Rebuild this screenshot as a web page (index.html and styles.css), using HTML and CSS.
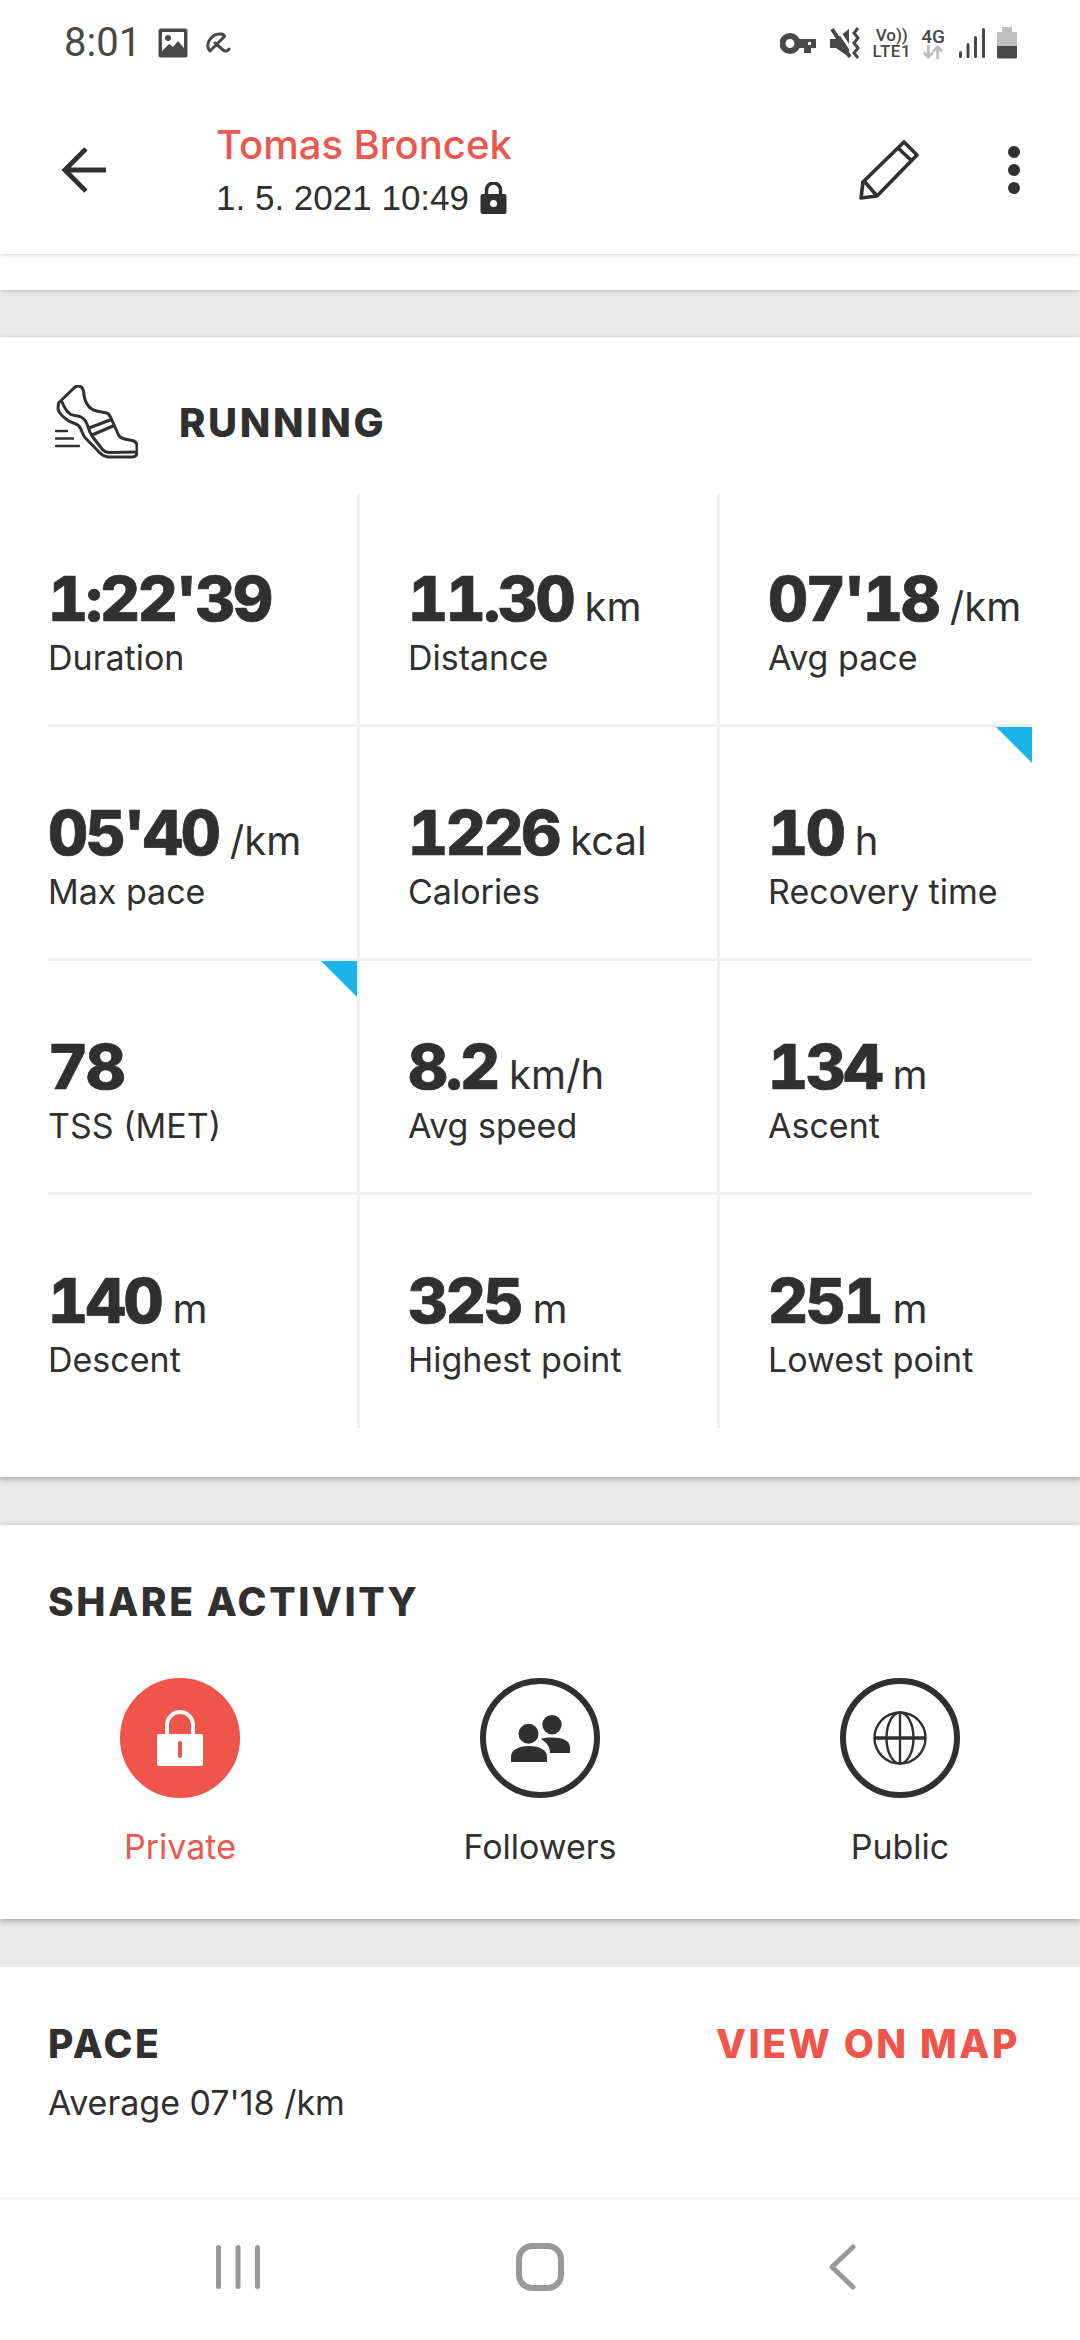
FILE: index.html
```html
<!DOCTYPE html>
<html lang="en">
<head>
    <meta charset="UTF-8">
    <meta name="viewport" content="width=device-width, initial-scale=1.0">
    <title>Running activity</title>
    <link rel="stylesheet" href="styles.css">
</head>
<body>
    <div class="top">
        <div class="status-bar">
            <div class="status-left">
                <span class="time">8:01</span>
                <svg class="ic-gallery" width="30" height="30" viewBox="0 0 30 30"><rect x="0.5" y="0.5" width="29" height="29" rx="2.5" fill="#484848"/><rect x="4" y="4" width="22" height="22" fill="#fff"/><circle cx="10" cy="10" r="3" fill="#484848"/><path d="M4 23l7-7 4 3 5-6 6 7v6H4z" fill="#484848"/></svg>
                <svg class="ic-umbrella" width="26" height="22" viewBox="0 0 26 22" fill="none" stroke="#484848" stroke-width="3" stroke-linecap="round" stroke-linejoin="round"><path d="M5 19C-1 12 7 1 16 2c2 .2 3 1 3.500 2.500L5 19zM10 11l8 7c2 1.800 5 1 6-1"/></svg>
            </div>
            <div class="status-right">
                <svg class="ic-key" width="36" height="21" viewBox="0 0 36 21"><circle cx="10" cy="10.500" r="7.500" fill="none" stroke="#484848" stroke-width="6"/><path d="M16 6h20v9h-5v5h-7v-5h-8z" fill="#484848"/><rect x="28" y="9" width="3" height="3" fill="#fff"/></svg>
                <svg class="ic-mute" width="30" height="32" viewBox="0 0 30 32"><path d="M0 12h6L19 2v28L6 21H0z" fill="#484848"/><path d="M6 0l18 27" stroke="#fff" stroke-width="3"/><path d="M2 2l18 28" stroke="#484848" stroke-width="4"/><path d="M28 1l-4 5 4 5-4 5 4 5-4 5 4 5" fill="none" stroke="#484848" stroke-width="3"/></svg>
                <div class="volte"><span>Vo))</span><span class="lte">LTE1</span></div>
                <div class="net">
                    <span>4G</span>
                    <svg width="22" height="14" viewBox="0 0 22 15" fill="none" stroke="#bdbdbd" stroke-width="3"><path d="M6 0v13M1 8l5 5 5-5"/><path d="M16 15V2M11 7l5-5 5 5"/></svg>
                </div>
                <svg class="ic-signal" width="26" height="30" viewBox="0 0 26 30" fill="#484848"><rect x="0" y="23" width="3" height="7" rx="1.500"/><rect x="7.500" y="15" width="3" height="15" rx="1.500"/><rect x="15" y="8" width="3" height="22" rx="1.500"/><rect x="23" y="0" width="3" height="30" rx="1.500"/></svg>
                <svg class="ic-battery" width="20" height="32" viewBox="0 0 20 32"><path d="M5 0h10v5h5v15H0V5h5z" fill="#bfbfbf"/><path d="M0 19h20v11a1.500 1.500 0 0 1-1.500 1.500h-17A1.500 1.500 0 0 1 0 30z" fill="#484848"/></svg>
            </div>
        </div>
        <div class="app-bar">
            <svg class="back" width="48" height="46" viewBox="0 0 48 48" fill="none" stroke="#303030" stroke-width="5"><path d="M47 24H3M26 2L4 24l22 22"/></svg>
            <div class="title-block">
                <div class="title">Tomas Broncek</div>
                <div class="subtitle">1. 5. 2021 10:49
                    <svg width="27" height="32" viewBox="0 0 26 32"><path d="M2 12h22a2 2 0 0 1 2 2v16a2 2 0 0 1-2 2H2a2 2 0 0 1-2-2V14a2 2 0 0 1 2-2z" fill="#303030"/><path d="M6 13V8a7 7 0 0 1 14 0v5" fill="none" stroke="#303030" stroke-width="3.500"/><circle cx="13" cy="21.500" r="3.500" fill="#fff"/></svg>
                </div>
            </div>
            <svg class="pencil" width="60" height="60" viewBox="0 0 60 60" fill="none" stroke="#303030" stroke-width="3.600" stroke-linejoin="round"><path d="M45 2l13 13-40 41-16 2 2-16z"/><path d="M39 8l14 13M6 42l12 14"/></svg>
            <div class="dots"><i></i><i></i><i></i></div>
        </div>
    </div>
    <div class="strip"></div>

    <section class="card stats-card">
        <div class="activity">
            <svg width="83" height="74" viewBox="0 0 83 74" fill="none" stroke="#303030" stroke-width="3" stroke-linecap="round" stroke-linejoin="round">
                <path d="M3.500 18L19 3c3-3 8-3 9.500 3 .5 5 1 9 3 12 2 4 6 7 10 8 3 1 7 1 10 2 2 .5 3 2 4 4l8 18c1.500 2.500 3 3.500 6 4l7.500 1.500c3 .6 5 2.500 5 5.500V67c0 3.500-1.500 5-5 5H55c-4 0-7-1-10-4L29.500 52c-2-3-3-8-5.500-11-3-3-7-3-11-5.500C8 32 4 29 3 24z"/>
                <path d="M7 17c2 5 5 10 9 12.500 3 1.500 7 1 10 2.500 4 2 6 6 7 10 1 3 2 6 4 9l10 13c2 2.500 5 3.500 8 3.500l27-.5"/>
                <path d="M34 43l21-8M37 50l21-9"/>
                <path d="M1 46h11M1 53.500h17M1 61h23" stroke-width="2.400"/>
            </svg>
            <h2 class="activity-name">RUNNING</h2>
        </div>
        <div class="grid">
            <div class="cell"><div class="value"><b>1:22'39</b></div><div class="label">Duration</div></div>
            <div class="cell"><div class="value"><b>11.30</b> km</div><div class="label">Distance</div></div>
            <div class="cell"><div class="value"><b>07'18</b> /km</div><div class="label">Avg pace</div></div>
            <div class="cell"><div class="value"><b>05'40</b> /km</div><div class="label">Max pace</div></div>
            <div class="cell"><div class="value"><b>1226</b> kcal</div><div class="label">Calories</div></div>
            <div class="cell"><span class="corner"></span><div class="value"><b>10</b> h</div><div class="label">Recovery time</div></div>
            <div class="cell"><span class="corner"></span><div class="value"><b>78</b></div><div class="label">TSS (MET)</div></div>
            <div class="cell"><div class="value"><b>8.2</b> km/h</div><div class="label">Avg speed</div></div>
            <div class="cell"><div class="value"><b>134</b> m</div><div class="label">Ascent</div></div>
            <div class="cell"><div class="value"><b>140</b> m</div><div class="label">Descent</div></div>
            <div class="cell"><div class="value"><b>325</b> m</div><div class="label">Highest point</div></div>
            <div class="cell"><div class="value"><b>251</b> m</div><div class="label">Lowest point</div></div>
        </div>
    </section>

    <section class="card share-card">
        <h3 class="section-title">SHARE ACTIVITY</h3>
        <div class="share-options">
            <div class="share active">
                <div class="circle">
                    <svg width="46" height="56" viewBox="0 0 46 56"><path d="M10 26V15a13 13 0 0 1 26 0v11" fill="none" stroke="#fff" stroke-width="4"/><rect y="24" width="46" height="32" rx="2" fill="#fff"/><rect x="21" y="31" width="4" height="17" rx="2" fill="#f0554c"/></svg>
                </div>
                <span>Private</span>
            </div>
            <div class="share">
                <div class="circle">
                    <svg width="59" height="47" viewBox="0 0 59 47" fill="#303030"><ellipse cx="17.500" cy="18.700" rx="10" ry="10"/><path d="M0 47V42c0-7 7-11 18-11s18 4 18 11v5z"/><ellipse cx="41" cy="9.700" rx="9.700" ry="9.700"/><path d="M30 24c2-1 6-1.500 10-1.500 12 0 19 3 19 10V38H39c0-6-3-10-9-14z"/></svg>
                </div>
                <span>Followers</span>
            </div>
            <div class="share">
                <div class="circle">
                    <svg width="54" height="54" viewBox="0 0 54 54" fill="none" stroke="#303030" stroke-width="2.400"><circle cx="27" cy="27" r="25.500"/><ellipse cx="27" cy="27" rx="13.500" ry="25.500"/><path d="M27 1.500v51"/><path d="M1.500 27h51" stroke-width="3.400"/></svg>
                </div>
                <span>Public</span>
            </div>
        </div>
    </section>

    <section class="card pace-card">
        <div class="pace-head">
            <h3 class="section-title">PACE</h3>
            <a class="map-link">VIEW ON MAP</a>
        </div>
        <p class="pace-avg">Average 07'18 /km</p>
    </section>

    <nav class="nav-bar">
        <svg width="44" height="46" viewBox="0 0 44 46" fill="#999"><rect x="0" y="1" width="5" height="44" rx="2.500"/><rect x="19.500" y="1" width="5" height="44" rx="2.500"/><rect x="39" y="1" width="5" height="44" rx="2.500"/></svg>
        <svg width="48" height="48" viewBox="0 0 48 48" fill="none" stroke="#999" stroke-width="6"><rect x="3" y="3" width="42" height="42" rx="13"/></svg>
        <svg width="28" height="46" viewBox="0 0 28 46" fill="none" stroke="#999" stroke-width="5" stroke-linecap="round" stroke-linejoin="round"><path d="M25 3L4 23l21 20"/></svg>
    </nav>
</body>
</html>
```

FILE: styles.css
```css
* {
    box-sizing: border-box;
}
body {
    margin: 0;
    width: 1080px;
    height: 2340px;
    background-color: #eaeaea;
    color: #303030;
    font-family: Inter, "Liberation Sans", sans-serif;
    overflow: hidden;
}
h2, h3, p {
    margin: 0;
}
.top {
    position: relative;
    z-index: 2;
    height: 254px;
    background: white;
    box-shadow: 0 1px 5px rgba(0, 0, 0, 0.16);
}
.status-bar {
    height: 90px;
    padding: 27px 63px 0 64px;
    display: flex;
    justify-content: space-between;
    align-items: flex-start;
}
.status-left {
    display: flex;
    align-items: center;
    gap: 17px;
}
.time {
    font-family: Roboto, sans-serif;
    font-size: 40px;
    line-height: 32px;
    color: #484848;
}
.status-right {
    display: flex;
    align-items: center;
    gap: 12px;
    color: #484848;
    font-family: Roboto, sans-serif;
    font-weight: 500;
}
.ic-key {
    margin-right: 2px;
}
.volte {
    display: flex;
    flex-direction: column;
    align-items: center;
    font-size: 17px;
    line-height: 16px;
    width: 39px;
    margin-right: -2px;
}
.lte {
    letter-spacing: 0.5px;
}
.net {
    display: flex;
    flex-direction: column;
    align-items: center;
    font-size: 19px;
    line-height: 17px;
    margin-right: 2px;
}
.net svg {
    display: block;
}
.app-bar {
    height: 164px;
    display: flex;
    align-items: center;
    padding: 0 60px 4px 60px;
}
.back {
    flex: none;
}
.title-block {
    flex: 1;
    margin-left: 108px;
}
.title {
    font-size: 40px;
    font-weight: 500;
    line-height: 50px;
    color: #ea584f;
}
.subtitle {
    display: flex;
    align-items: center;
    gap: 11px;
    margin-top: 6px;
    font-size: 35px;
    line-height: 44px;
    font-family: "Liberation Sans", sans-serif;
}
.pencil {
    margin-right: 89px;
}
.dots {
    display: flex;
    flex-direction: column;
    gap: 6px;
}
.dots i {
    display: block;
    width: 12px;
    height: 12px;
    border-radius: 50%;
    background: #303030;
}
.strip {
    height: 36px;
    background: white;
    box-shadow: 0 1px 4px rgba(0, 0, 0, 0.2);
    position: relative;
    z-index: 1;
}
.card {
    background: white;
    box-shadow: 0 2px 6px rgba(0, 0, 0, 0.3);
    position: relative;
}
.stats-card {
    margin-top: 47px;
    height: 1140px;
}
.activity {
    height: 156px;
    padding: 14px 0 0 55px;
    display: flex;
    align-items: center;
    gap: 41px;
}
.activity-name {
    font-size: 40px;
    font-weight: 800;
    letter-spacing: 2.6px;
}
.grid {
    margin-left: 48px;
    width: 984px;
    display: grid;
    grid-template-columns: 312px 360px 312px;
}
.cell {
    position: relative;
    height: 234px;
    padding-top: 70px;
    padding-left: 48px;
    border-bottom: 3px solid #f0f0f0;
    border-right: 3px solid #f0f0f0;
}
.cell:nth-child(3n+1) {
    padding-left: 0;
}
.cell:nth-child(3n) {
    border-right: none;
}
.cell:nth-last-child(-n+3) {
    border-bottom: none;
    height: 233px;
}
.corner {
    position: absolute;
    top: 0;
    right: 0;
    width: 36px;
    height: 36px;
    background: #1ab4ea;
    clip-path: polygon(0 0, 100% 0, 100% 100%);
}
.value {
    font-size: 40px;
    line-height: 72px;
    white-space: nowrap;
}
.value b {
    font-size: 62px;
    font-weight: 800;
    font-variant-numeric: tabular-nums;
    letter-spacing: -2.3px;
    -webkit-text-stroke: 0.7px #303030;
}
.label {
    margin-top: -5px;
    font-size: 34px;
    line-height: 40px;
}
.share-card {
    margin-top: 48px;
    height: 394px;
    padding-top: 54px;
}
.section-title {
    font-size: 39px;
    font-weight: 800;
    line-height: 46px;
    letter-spacing: 2.6px;
    padding-left: 48px;
}
.share-options {
    display: flex;
    margin-top: 53px;
}
.share {
    width: 360px;
    display: flex;
    flex-direction: column;
    align-items: center;
    font-size: 34px;
    line-height: 40px;
    gap: 29px;
}
.circle {
    width: 120px;
    height: 120px;
    border-radius: 50%;
    border: 6px solid #303030;
    display: flex;
    align-items: center;
    justify-content: center;
}
.share.active {
    color: #ea584f;
}
.share.active .circle {
    background: #f0554c;
    border-color: #f0554c;
}
.pace-card {
    margin-top: 48px;
    height: 230px;
    padding: 54px 60px 0 0;
    box-shadow: none;
}
.pace-head {
    display: flex;
    justify-content: space-between;
}
.map-link {
    font-size: 39px;
    font-weight: 800;
    line-height: 46px;
    letter-spacing: 2.6px;
    color: #f0554c;
}
.pace-avg {
    padding-left: 48px;
    margin-top: 16px;
    font-size: 34px;
    line-height: 40px;
}
.nav-bar {
    height: 143px;
    background: white;
    border-top: 3px solid #f6f6f6;
    display: grid;
    grid-template-columns: repeat(3, 302px);
    justify-content: center;
    justify-items: center;
    align-items: center;
    padding-bottom: 7px;
}
```
